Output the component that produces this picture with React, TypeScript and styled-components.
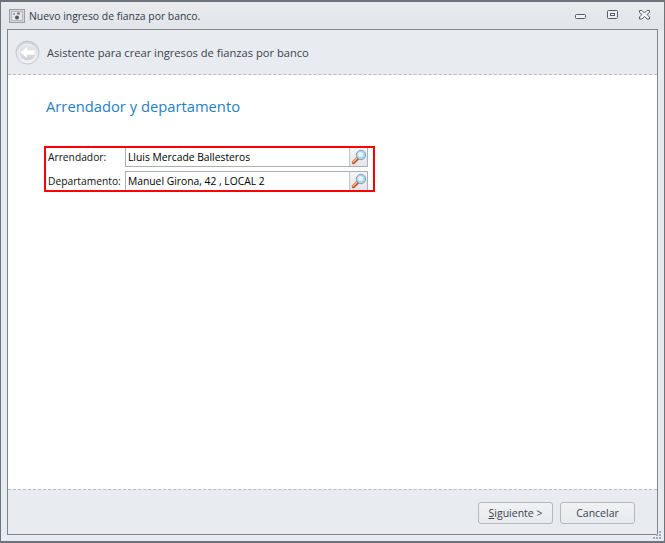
import React from "react";
import styled, { createGlobalStyle } from "styled-components";

const GlobalStyle = createGlobalStyle`
  html, body {
    margin: 0;
    padding: 0;
    background: #e8ebef;
  }
  * {
    box-sizing: border-box;
  }
`;

const Window = styled.div`
  display: flex;
  flex-direction: column;
  width: 665px;
  height: 543px;
  padding: 0 6px 6px 6px;
  border: 1px solid #6d7379;
  border-top-width: 2px;
  border-bottom-width: 2px;
  background: linear-gradient(#e9ebee, #e1e4e8 28px, #e8ebef 28px);
  font-family: "Open Sans", "Liberation Sans", sans-serif;
  font-size: 10.4px;
  color: #000;
`;

const TitleBar = styled.div`
  display: flex;
  flex: 0 0 27px;
  align-items: center;
  gap: 4px;
  margin-left: 2px;
  color: #2f3a4a;
`;

const TitleText = styled.span`
  flex: 1;
`;

const WindowButtons = styled.div`
  display: flex;
  align-items: center;
  gap: 20px;
  margin-right: 7px;
`;

const Frame = styled.div`
  display: flex;
  flex: 1;
  flex-direction: column;
  border: 1px solid #7f8589;
`;

const Header = styled.div`
  display: flex;
  flex: 0 0 45px;
  align-items: center;
  gap: 7px;
  padding-left: 7px;
  border-bottom: 1px dashed #b9bcc0;
  background: #e8ebef;
  color: #3a434f;
  font-size: 11.15px;
`;

const Content = styled.div`
  flex: 1;
  padding: 20px 38px 0;
  background: #fff;
`;

const Heading = styled.h1`
  margin: 0 0 30px;
  font-size: 14.75px;
  font-weight: 400;
  line-height: 22px;
  color: #1f7fc4;
`;

const Form = styled.div`
  position: relative;
  display: flex;
  flex-direction: column;
  gap: 4px;
  width: 321px;
  margin-left: 1px;
`;

const Highlight = styled.div`
  position: absolute;
  top: -1px;
  left: -3px;
  width: 331px;
  height: 46px;
  border: 2px solid #ff0000;
  pointer-events: none;
`;

const Row = styled.div`
  display: flex;
  align-items: center;
  height: 20px;
`;

const Label = styled.label`
  flex: 0 0 78px;
  padding-left: 1px;
  color: #111;
  font-size: 10.25px;
`;

const Field = styled.div`
  display: flex;
  flex: 1;
  height: 20px;
  border: 1px solid #abb0b6;
  background: #fff;
`;

const Value = styled.span`
  flex: 1;
  padding-left: 2px;
  line-height: 18px;
  font-size: 10.3px;
`;

const LookupButton = styled.div`
  display: flex;
  flex: 0 0 18px;
  align-items: center;
  justify-content: center;
  border-left: 1px solid #c3c7cc;
  background: linear-gradient(#f4f5f7, #e3e6ea);
`;

const Footer = styled.div`
  display: flex;
  flex: 0 0 45px;
  align-items: flex-start;
  justify-content: flex-end;
  gap: 7px;
  padding: 12px 22px 0 0;
  border-top: 1px dashed #b9bcc0;
  background: #e8ebef;
`;

const Button = styled.button`
  width: 75px;
  height: 22px;
  padding: 0;
  border: 1px solid #b3b8bd;
  border-radius: 3px;
  background: linear-gradient(#f0f2f4, #e8ebee);
  font: inherit;
  font-size: 10.5px;
  color: #3a434f;

  u {
    text-underline-offset: 1px;
  }
`;

const Grip = styled.svg`
  position: absolute;
  right: 3px;
  bottom: 3px;
`;

const SafeIcon = () => (
  <svg width="16" height="16" viewBox="0 0 16 16">
    <rect x="0.5" y="1.5" width="15" height="13" fill="#d3d7db" stroke="#9aa0a6" />
    <rect x="2.5" y="3.5" width="11" height="9" fill="#e4e6e9" stroke="#b4b8bc" />
    <circle cx="8" cy="9.5" r="2" fill="#565b62" />
    <rect x="8" y="4.5" width="3" height="2" fill="#7d8288" />
    <rect x="4" y="5" width="2" height="2" fill="#a3a7ad" />
  </svg>
);

const MinimizeIcon = () => (
  <svg width="12" height="12" viewBox="0 0 12 12">
    <rect x="0.5" y="4.5" width="10" height="4" rx="1" fill="#f1f2f4" stroke="#555b62" />
  </svg>
);

const RestoreIcon = () => (
  <svg width="12" height="12" viewBox="0 0 12 12">
    <rect x="0.5" y="0.5" width="10" height="8" rx="1" fill="#eceef0" stroke="#555b62" />
    <rect x="3.5" y="3.5" width="4" height="2" fill="#fff" stroke="#555b62" />
  </svg>
);

const CloseIcon = () => (
  <svg width="12" height="12" viewBox="0 0 12 12">
    <path
      d="M1 .5h2L5.500 3 8 .5h2.500v2L8 4.500l2.500 2.500v2H8L5.500 6.500 3 9H.5V7L3 4.500.5 2.500V.5z"
      fill="#f4f5f6"
      stroke="#555b62"
    />
  </svg>
);

const BackIcon = () => (
  <svg width="25" height="25" viewBox="0 0 25 25">
    <defs>
      <linearGradient id="backRing" x1="0" y1="0" x2="0" y2="1">
        <stop offset="0" stopColor="#cdd1d7" />
        <stop offset="1" stopColor="#f4f5f7" />
      </linearGradient>
      <linearGradient id="backCore" x1="0" y1="0" x2="0" y2="1">
        <stop offset="0" stopColor="#e6e8ec" />
        <stop offset="1" stopColor="#ccd0d6" />
      </linearGradient>
    </defs>
    <circle cx="12.5" cy="12.5" r="11.5" fill="url(#backRing)" stroke="#c4c9cf" />
    <circle cx="12.5" cy="12.5" r="8.5" fill="url(#backCore)" stroke="#f3f4f6" />
    <path d="M5.500 12.500l6.500-5.500v3.300h7.500v4.400H12V18z" fill="#ffffff" />
  </svg>
);

const SearchIcon = () => (
  <svg width="16" height="16" viewBox="0 0 16 16">
    <path d="M2.500 13.500l4.500-4.500" stroke="#c0552f" strokeWidth="3.400" strokeLinecap="round" />
    <path d="M2.200 13l3.500-3.500" stroke="#f6bb8c" strokeWidth="1.400" strokeLinecap="round" />
    <circle cx="10" cy="6" r="4.700" fill="#a9d6f0" stroke="#8aa3b5" />
    <circle cx="9.500" cy="5.500" r="2.600" fill="#e6f5fc" />
  </svg>
);

const fields = [
  { label: "Arrendador:", value: "Lluis Mercade Ballesteros" },
  { label: "Departamento:", value: "Manuel Girona, 42 , LOCAL 2" },
];

export default function App() {
  return (
    <>
      <GlobalStyle />
      <Window>
        <TitleBar>
          <SafeIcon />
          <TitleText>Nuevo ingreso de fianza por banco.</TitleText>
          <WindowButtons>
            <MinimizeIcon />
            <RestoreIcon />
            <CloseIcon />
          </WindowButtons>
        </TitleBar>
        <Frame>
          <Header>
            <BackIcon />
            <span>Asistente para crear ingresos de fianzas por banco</span>
          </Header>
          <Content>
            <Heading>Arrendador y departamento</Heading>
            <Form>
              {fields.map((f) => (
                <Row key={f.label}>
                  <Label>{f.label}</Label>
                  <Field>
                    <Value>{f.value}</Value>
                    <LookupButton>
                      <SearchIcon />
                    </LookupButton>
                  </Field>
                </Row>
              ))}
              <Highlight />
            </Form>
          </Content>
          <Footer>
            <Button>
              <u>S</u>iguiente &gt;
            </Button>
            <Button>Cancelar</Button>
          </Footer>
        </Frame>
        <Grip width="10" height="10" viewBox="0 0 10 10">
          <path d="M7 1h2v2H7zM4 4h2v2H4zM7 4h2v2H7zM1 7h2v2H1zM4 7h2v2H4zM7 7h2v2H7z" fill="#a6abb0" />
        </Grip>
      </Window>
    </>
  );
}
